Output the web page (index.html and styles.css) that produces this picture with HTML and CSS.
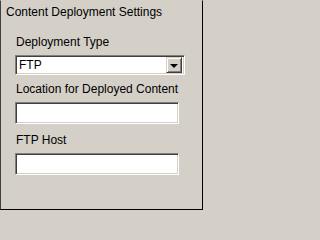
FILE: index.html
```html
<!DOCTYPE html>
<html>
<head>
<meta charset="utf-8">
<link rel="stylesheet" href="styles.css">
</head>
<body>
<div class="panel">
  <div class="title">Content Deployment Settings</div>
  <div class="fields">
    <div class="field">
      <div class="label">Deployment Type</div>
      <div class="select">
        <span class="select-value">FTP</span>
        <span class="select-btn"><span class="arrow"></span></span>
      </div>
    </div>
    <div class="field">
      <div class="label">Location for Deployed Content</div>
      <input class="text" type="text">
    </div>
    <div class="field field-last">
      <div class="label">FTP Host</div>
      <input class="text" type="text">
    </div>
  </div>
</div>
</body>
</html>
```

FILE: styles.css
```css
html, body {
  margin: 0;
  padding: 0;
  background: #d4d0c8;
}
.panel {
  width: 203px;
  height: 210px;
  box-sizing: border-box;
  background: #d4d0c8;
  border-left: 1px solid #404040;
  border-right: 1px solid #000;
  border-bottom: 1px solid #000;
  border-top: 1px solid #d4d0c8;
  font-family: "Liberation Sans", Arial, sans-serif;
  font-size: 12px;
  line-height: 14px;
  color: #000;
  padding: 4px 0 0 5px;
}
.fields {
  display: flex;
  flex-direction: column;
  padding-left: 9px;
  margin-top: 16px;
  gap: 7px;
}
.field {
  display: flex;
  flex-direction: column;
  gap: 6px;
}
.field-last {
  margin-top: 2px;
}
.label {
  padding-left: 1px;
}
.select {
  width: 170px;
  height: 20px;
  box-sizing: border-box;
  display: flex;
  align-items: center;
  justify-content: space-between;
  background: #fff;
  border-top: 1px solid #808080;
  border-left: 1px solid #808080;
  border-bottom: 1px solid #fff;
  border-right: 1px solid #fff;
  box-shadow: inset 1px 1px 0 #404040, inset -1px -1px 0 #d4d0c8;
  padding: 2px 2px 2px 3px;
}
.select-value {
  line-height: 14px;
}
.select-btn {
  width: 16px;
  height: 16px;
  box-sizing: border-box;
  background: #d4d0c8;
  border-top: 1px solid #d4d0c8;
  border-left: 1px solid #d4d0c8;
  border-right: 1px solid #404040;
  border-bottom: 1px solid #404040;
  box-shadow: inset 1px 1px 0 #fff, inset -1px -1px 0 #808080;
  display: flex;
  align-items: center;
  justify-content: center;
}
.arrow {
  width: 0;
  height: 0;
  border-left: 4px solid transparent;
  border-right: 4px solid transparent;
  border-top: 4px solid #000;
  margin-top: 1px;
}
.text {
  width: 164px;
  height: 22px;
  box-sizing: border-box;
  margin: 0;
  padding: 0 3px;
  background: #fff;
  border-top: 1px solid #808080;
  border-left: 1px solid #808080;
  border-bottom: 1px solid #fff;
  border-right: 1px solid #fff;
  box-shadow: inset 1px 1px 0 #404040, inset -1px -1px 0 #d4d0c8;
  outline: none;
  font-family: "Liberation Sans", Arial, sans-serif;
  font-size: 12px;
}
```
